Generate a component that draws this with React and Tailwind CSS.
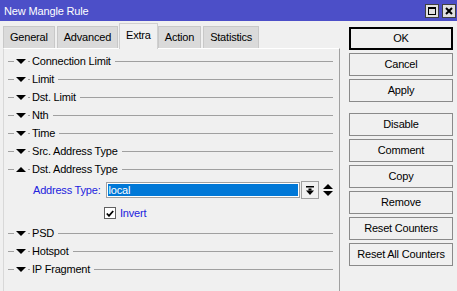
import React from "react";

const font = { fontFamily: '"Liberation Sans", Arial, sans-serif' };

function Tri({ up }) {
  return (
    <svg width="10" height="5" viewBox="0 0 10 5" className="shrink-0">
      {up ? <polygon points="0,5 10,5 5,0" fill="#000" /> : <polygon points="0,0 10,0 5,5" fill="#000" />}
    </svg>
  );
}

function Section({ label, up }) {
  return (
    <div className="flex items-center h-[18px]">
      <span className="w-[6px] h-px bg-[#a0a0a0] shrink-0" />
      <span className="ml-[2px] flex items-center"><Tri up={up} /></span>
      <span className="ml-[2px] w-[2px] h-px bg-[#a0a0a0] shrink-0" />
      <span className="ml-[2px] text-[11px] tracking-[-0.2px] text-black whitespace-nowrap leading-none">{label}</span>
      <span className="ml-[4px] flex-1 h-px bg-[#a0a0a0]" />
    </div>
  );
}

function Btn({ children, def }) {
  return (
    <div
      className={
        "h-[23px] flex items-center justify-center text-[11px] tracking-[-0.2px] text-black bg-[#f0f0f0] " +
        (def ? "border-2 border-black" : "border border-[#8a8a8a]")
      }
    >
      {children}
    </div>
  );
}

function Tab({ children, active }) {
  if (active) {
    return (
      <div className="h-[26px] -mb-px relative z-10 px-[6px] flex items-center bg-[#f0f0f0] border-t border-l border-r border-[#d0d0d0] text-[11px] tracking-[-0.2px] text-black -mx-px pb-[3px]">
        {children}
      </div>
    );
  }
  return (
    <div className="h-[22px] px-[6px] flex items-center bg-[#dadada] border-t border-l border-r border-[#c8c8c8] text-[11px] tracking-[-0.2px] text-black mr-[2px]">
      {children}
    </div>
  );
}

export default function App() {
  return (
    <div className="w-[457px] h-[291px] bg-[#f0f0f0] overflow-hidden flex flex-col" style={font}>
      {/* title bar */}
      <div className="h-[21px] bg-[#4c4fc8] flex items-center justify-between pl-[4px] pr-[1px] shrink-0">
        <span className="text-white text-[11px] tracking-[-0.15px] pt-[2px]">New Mangle Rule</span>
        <div className="flex gap-[3px]">
          <div className="w-[14px] h-[14px] bg-[#e0e0e0] border border-[#404040] flex items-center justify-center">
            <div className="w-[8px] h-[8px] border border-black border-t-2" />
          </div>
          <div className="w-[14px] h-[14px] bg-[#e0e0e0] border border-[#404040] flex items-center justify-center">
            <svg width="8" height="8" viewBox="0 0 8 8">
              <path d="M1 1 L7 7 M7 1 L1 7" stroke="#000" strokeWidth="2" />
            </svg>
          </div>
        </div>
      </div>

      <div className="flex flex-1">
        {/* left area */}
        <div className="w-[341px] pl-[3px] pt-[2px] flex flex-col">
          <div className="flex items-end h-[25px]">
            <Tab>General</Tab>
            <Tab>Advanced</Tab>
            <div className="mr-[1px]"><Tab active>Extra</Tab></div>
            <Tab>Action</Tab>
            <Tab>Statistics</Tab>
          </div>
          <div className="w-[337px] flex-1 border-t border-l border-t-[#ffffff] border-l-[#d8d8d8] border-r border-r-[#a0a0a0] pl-[4px] pr-[6px] pt-[3px]">
            <Section label="Connection Limit" />
            <Section label="Limit" />
            <Section label="Dst. Limit" />
            <Section label="Nth" />
            <Section label="Time" />
            <Section label="Src. Address Type" />
            <Section label="Dst. Address Type" up />
            <div className="h-[24px] flex items-center pl-[25px]">
              <span className="text-[11px] tracking-[-0.2px] text-[#2222dd]">Address Type:</span>
              <div className="ml-[5px] w-[194px] h-[16px] border border-[#a0a0a0] bg-white p-px">
                <div className="w-full h-full bg-[#0078d7] text-white text-[11px] tracking-[-0.2px] leading-[12px] pl-[1px]">local</div>
              </div>
              <div className="ml-[1px] w-[18px] h-[18px] border border-[#a0a0a0] bg-[#f0f0f0] flex items-center justify-center">
                <svg width="8" height="9" viewBox="0 0 8 9">
                  <rect x="0" y="0" width="8" height="1.5" fill="#000" />
                  <rect x="2.5" y="2.5" width="3" height="2" fill="#000" />
                  <polygon points="0,4.5 8,4.5 4,9" fill="#000" />
                </svg>
              </div>
              <div className="ml-[4px]">
                <svg width="10" height="12" viewBox="0 0 10 12">
                  <polygon points="0,5 10,5 5,0" fill="#000" />
                  <polygon points="0,7 10,7 5,12" fill="#000" />
                </svg>
              </div>
            </div>
            <div className="h-[22px] flex items-center pl-[96px]">
              <div className="w-[12px] h-[12px] border border-[#606060] bg-white flex items-center justify-center">
                <svg width="8" height="7" viewBox="0 0 8 7">
                  <path d="M0.8 3.5 L3 5.8 L7.2 1" stroke="#000" strokeWidth="1.8" fill="none" />
                </svg>
              </div>
              <span className="ml-[4px] text-[11px] tracking-[-0.2px] text-[#2222dd]">Invert</span>
            </div>
            <Section label="PSD" />
            <Section label="Hotspot" />
            <Section label="IP Fragment" />
          </div>
        </div>

        {/* right buttons */}
        <div className="ml-[8px] w-[104px] pt-[6px] flex flex-col gap-[3px]">
          <Btn def>OK</Btn>
          <Btn>Cancel</Btn>
          <Btn>Apply</Btn>
          <div className="h-[5px]" />
          <Btn>Disable</Btn>
          <Btn>Comment</Btn>
          <Btn>Copy</Btn>
          <Btn>Remove</Btn>
          <Btn>Reset Counters</Btn>
          <Btn>Reset All Counters</Btn>
        </div>
      </div>
    </div>
  );
}
